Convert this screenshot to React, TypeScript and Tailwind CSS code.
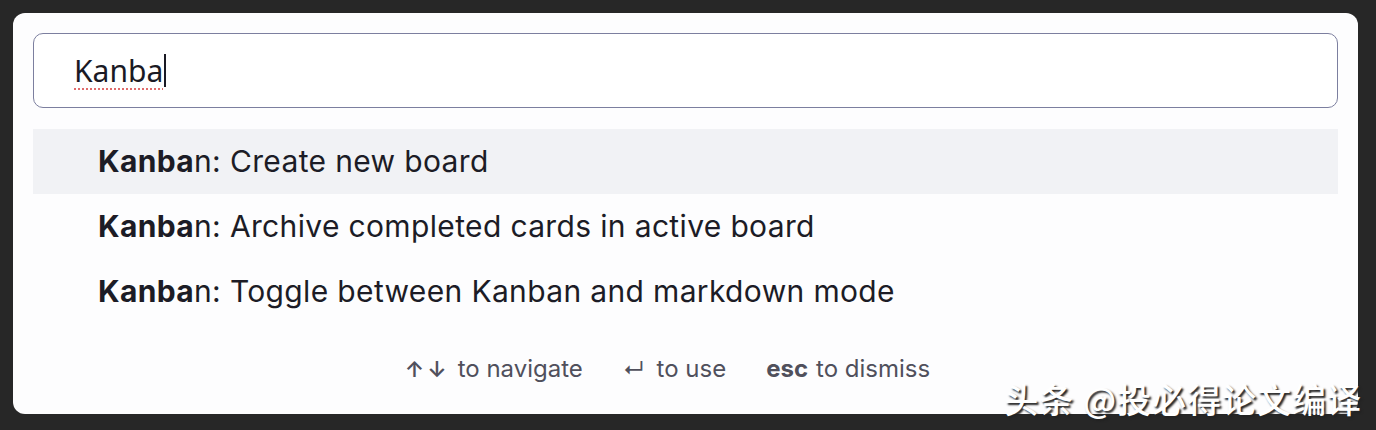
import React from 'react';

const items = [
  'n: Create new board',
  'n: Archive completed cards in active board',
  'n: Toggle between Kanban and markdown mode',
];

export default function App() {
  return (
    <div className="relative h-[430px] w-[1376px] overflow-hidden bg-[#272727] p-[13px] pr-[18px] font-['Inter',sans-serif]">
      <div className="flex h-[401px] flex-col rounded-[12px] bg-[#fdfdfe] p-5">
        {/* search input */}
        <div className="flex h-[75px] items-center rounded-[10px] border border-[#7c7f9f] bg-white pl-10">
          <span className="font-['Noto_Sans',sans-serif] text-[30px] text-[#1a1a24] underline decoration-[#e06c6c] decoration-dotted decoration-2 underline-offset-[6px]">
            Kanba
          </span>
          <span className="ml-[1px] h-[33px] w-[2px] bg-[#1a1a24]" />
        </div>

        {/* suggestions */}
        <div className="mt-[21px] flex flex-col">
          {items.map((rest, i) => (
            <div
              key={i}
              className={`flex h-[65px] items-center pl-[65px] text-[30px] tracking-[0.35px] text-[#1c1c26] ${
                i === 0 ? 'bg-[#f1f2f5]' : ''
              }`}
            >
              <span className="font-bold">Kanba</span>
              <span>{rest}</span>
            </div>
          ))}
        </div>

        {/* footer hints */}
        <div className="mt-[27px] flex items-center justify-center gap-10 pr-9 text-[24px] text-[#50505c]">
          <span className="flex items-center gap-2">
            <span className="text-[22px] font-semibold tracking-[3px]">↑↓</span>
            <span>to navigate</span>
          </span>
          <span className="flex items-center gap-3">
            <span className="text-[22px]">↵</span>
            <span>to use</span>
          </span>
          <span className="flex items-center gap-2">
            <span className="font-bold">esc</span>
            <span>to dismiss</span>
          </span>
        </div>
      </div>

      {/* watermark */}
      <div className="absolute bottom-[14px] right-[14px] font-['Noto_Sans_CJK_SC',sans-serif] text-[34px] font-medium leading-none tracking-[1px] text-white [text-shadow:2px_2px_2px_#222]">
        头条 @投必得论文编译
      </div>
    </div>
  );
}
